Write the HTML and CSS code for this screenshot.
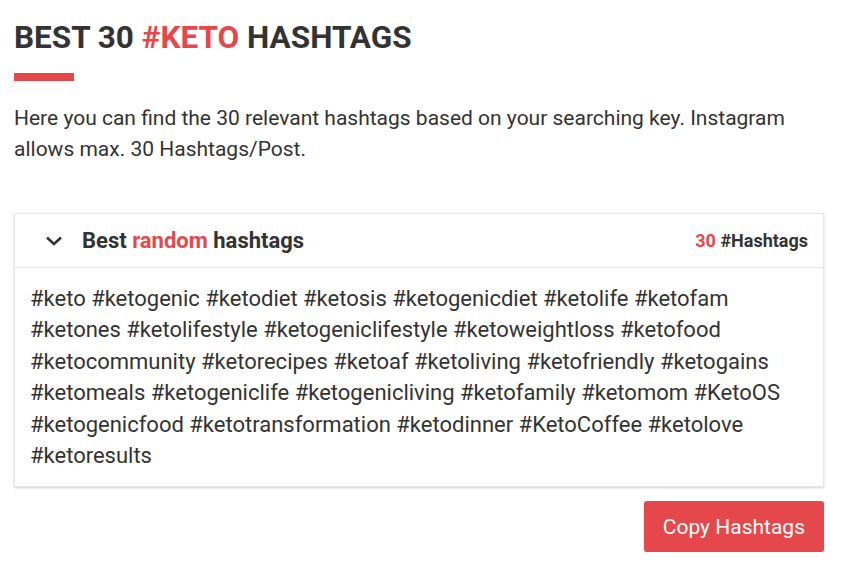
FILE: index.html
```html
<!DOCTYPE html>
<html>
<head>
<meta charset="utf-8">
<link rel="stylesheet" href="styles.css">
</head>
<body>
<div class="page">
  <h1 class="title">BEST 30 <span class="red">#KETO</span> HASHTAGS</h1>
  <div class="bar"></div>
  <p class="intro">Here you can find the 30 relevant hashtags based on your searching key. Instagram allows max. 30 Hashtags/Post.</p>
  <div class="card">
    <div class="card-head">
      <div class="head-left">
        <svg class="chev" width="18" height="10" viewBox="0 0 18 10"><path d="M2 1.5 L9 8 L16 1.5" fill="none" stroke="#333" stroke-width="2.6" stroke-linecap="butt" stroke-linejoin="miter"/></svg>
        <span class="head-title">Best <span class="red">random</span> hashtags</span>
      </div>
      <div class="count"><span class="red">30</span> #Hashtags</div>
    </div>
    <div class="card-body">#keto #ketogenic #ketodiet #ketosis #ketogenicdiet #ketolife #ketofam #ketones #ketolifestyle #ketogeniclifestyle #ketoweightloss #ketofood #ketocommunity #ketorecipes #ketoaf #ketoliving #ketofriendly #ketogains #ketomeals #ketogeniclife #ketogenicliving #ketofamily #ketomom #KetoOS #ketogenicfood #ketotransformation #ketodinner #KetoCoffee #ketolove #ketoresults</div>
  </div>
  <div class="actions">
    <button class="copy">Copy Hashtags</button>
  </div>
</div>
</body>
</html>
```
FILE: styles.css
```css
html, body { margin: 0; padding: 0; background: #fff; }
body { font-family: Roboto, "Noto Sans", sans-serif; color: #333; }
.page { padding: 19px 20px 0 14px; }
.red { color: #e5484b; }
.title {
  margin: 0;
  font-family: Roboto, sans-serif;
  font-weight: 700;
  font-size: 31.5px;
  line-height: 38px;
  color: #333;
}
.bar { width: 60px; height: 8px; background: #e5484b; margin-top: 16px; }
.intro {
  margin: 22px 0 0;
  font-size: 21px;
  line-height: 31px;
  color: #333;
}
.card {
  margin-top: 48px;
  background: #fff;
  border: 1px solid #e6e6e6;
  box-shadow: 0 1px 2px rgba(0,0,0,0.18);
}
.card-head {
  display: flex;
  justify-content: space-between;
  align-items: center;
  height: 53px;
  padding: 0 15px 0 30px;
  border-bottom: 1px solid #e6e6e6;
}
.head-left { display: flex; align-items: center; gap: 19px; }
.chev { display: block; }
.head-title { font-weight: 700; font-size: 22px; }
.count { font-weight: 700; font-size: 18px; }
.card-body {
  padding: 15px 15px 15px 15px;
  font-size: 22px;
  line-height: 31.4px;
  color: #333;
}
.actions { display: flex; justify-content: flex-end; margin-top: 14px; }
.copy {
  background: #e5484b;
  color: #fff;
  border: none;
  border-radius: 3px;
  font-family: Roboto, sans-serif;
  font-size: 21px;
  height: 51px;
  padding: 0 19px;
  box-shadow: 0 1px 2px rgba(0,0,0,0.2);
}
```
